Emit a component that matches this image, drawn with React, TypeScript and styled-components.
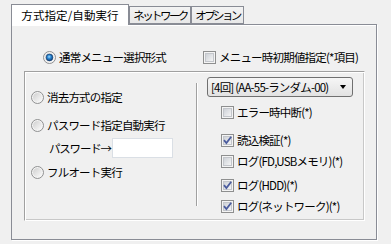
import styled, { createGlobalStyle } from "styled-components";

const GlobalStyle = createGlobalStyle`
  html, body {
    margin: 0;
    padding: 0;
    background: #f0f0f0;
  }
  body {
    font-family: "Noto Sans CJK JP", "Noto Sans", sans-serif;
    font-size: 11.5px;
    line-height: 16px;
    letter-spacing: -0.8px;
    color: #000;
  }
`;

type TabInfo = { label: string; width: number; spacing: number; active?: boolean };

const tabs: TabInfo[] = [
  { label: "方式指定/自動実行", width: 118, spacing: 0.1, active: true },
  { label: "ネットワーク", width: 62, spacing: -2.6 },
  { label: "オプション", width: 53, spacing: -2.6 },
];

type CheckInfo = { label: string; checked: boolean; gap: number };

const checks: CheckInfo[] = [
  { label: "エラー時中断(*)", checked: false, gap: 7 },
  { label: "読込検証(*)", checked: true, gap: 12 },
  { label: "ログ(FD,USBメモリ)(*)", checked: false, gap: 5 },
  { label: "ログ(HDD)(*)", checked: true, gap: 8 },
  { label: "ログ(ネットワーク)(*)", checked: true, gap: 5 },
];

const Radio = ({ selected = false }: { selected?: boolean }) => (
  <svg width="13" height="13" viewBox="0 0 13 13">
    <defs>
      <linearGradient id="radioFill" x1="0" y1="0" x2="1" y2="1">
        <stop offset="0" stopColor="#cfcfcf" />
        <stop offset="1" stopColor="#fbfbfb" />
      </linearGradient>
      <radialGradient id="radioDot" cx="0.45" cy="0.4" r="0.6">
        <stop offset="0" stopColor="#9fdcff" />
        <stop offset="0.45" stopColor="#2a86d2" />
        <stop offset="1" stopColor="#0b3c78" />
      </radialGradient>
    </defs>
    <circle cx="6.5" cy="6.5" r="6" fill="#f4f4f4" stroke="#8f9091" />
    <circle cx="6.5" cy="6.5" r="4.5" fill="url(#radioFill)" />
    {selected && <circle cx="6.5" cy="6.5" r="3.4" fill="url(#radioDot)" stroke="#143d6b" strokeWidth="0.6" />}
  </svg>
);

const Check = ({ checked = false }: { checked?: boolean }) => (
  <svg width="13" height="13" viewBox="0 0 13 13">
    <defs>
      <linearGradient id="checkFill" x1="0" y1="0" x2="1" y2="1">
        <stop offset="0" stopColor="#cbcfd5" />
        <stop offset="1" stopColor="#f7f7f7" />
      </linearGradient>
    </defs>
    <rect x="0.5" y="0.5" width="12" height="12" fill="#f4f4f4" stroke="#8e8f8f" />
    <rect x="2.5" y="2.5" width="8" height="8" fill="url(#checkFill)" stroke="#c3c6cb" />
    {checked && (
      <path d="M3 6.2 L5.4 9 L10.2 2.8" fill="none" stroke="#4b5c9e" strokeWidth="1.8" />
    )}
  </svg>
);

export default function App() {
  return (
    <Window>
      <GlobalStyle />
      <TabStrip>
        {tabs.map((t) => (
          <Tab key={t.label} $active={t.active} $width={t.width} $spacing={t.spacing}>
            {t.label}
          </Tab>
        ))}
      </TabStrip>
      <Panel>
        <TopRow>
          <Option>
            <Radio selected />
            <span>通常メニュー選択形式</span>
          </Option>
          <CheckOption $indent={0}>
            <Check />
            <span>メニュー時初期値指定(*項目)</span>
          </CheckOption>
        </TopRow>
        <GroupBox>
          <LeftColumn>
            <Option>
              <Radio />
              <span>消去方式の指定</span>
            </Option>
            <Option $gap={12}>
              <Radio />
              <span>パスワード指定自動実行</span>
            </Option>
            <PasswordRow>
              <PasswordLabel>パスワード→</PasswordLabel>
              <PasswordInput type="text" />
            </PasswordRow>
            <Option $gap={6}>
              <Radio />
              <span>フルオート実行</span>
            </Option>
          </LeftColumn>
          <Separator />
          <RightColumn>
            <Dropdown>
              <span>[4回] (AA-55-ランダム-00)</span>
              <Arrow />
            </Dropdown>
            {checks.map((c) => (
              <CheckOption key={c.label} $indent={14} $gap={c.gap}>
                <Check checked={c.checked} />
                <span>{c.label}</span>
              </CheckOption>
            ))}
          </RightColumn>
        </GroupBox>
      </Panel>
    </Window>
  );
}

const Window = styled.div`
  width: 391px;
  height: 244px;
  box-sizing: border-box;
  padding: 4px 0 0 11px;
`;

const TabStrip = styled.div`
  display: flex;
  align-items: flex-start;
  height: 21px;
  margin-bottom: -1px;
  position: relative;
  z-index: 1;
`;

const Tab = styled.div<{ $active?: boolean; $width: number; $spacing: number }>`
  box-sizing: border-box;
  width: ${(p) => p.$width}px;
  height: ${(p) => (p.$active ? 21 : 18)}px;
  margin-top: ${(p) => (p.$active ? 0 : 2)}px;
  border: 1px solid #898c95;
  border-bottom: ${(p) => (p.$active ? "none" : "1px solid #898c95")};
  background: ${(p) => (p.$active ? "#ffffff" : "linear-gradient(#f3f3f3, #e8e8e8)")};
  text-align: center;
  line-height: ${(p) => (p.$active ? 20 : 16)}px;
  white-space: nowrap;
  overflow: hidden;
  letter-spacing: ${(p) => p.$spacing}px;
`;

const Panel = styled.div`
  width: 366px;
  height: 216px;
  box-sizing: border-box;
  border: 1px solid #898c95;
  box-shadow: inset 0 1px 0 #ffffff, 1px 1px 0 #ffffff;
  padding: 24px 11px 0 12px;
`;

const TopRow = styled.div`
  display: flex;
  align-items: center;
  height: 16px;
  padding-left: 19px;

  & > :first-child {
    flex: 0 0 160px;
    min-width: 0;
  }
`;

const Option = styled.div<{ $gap?: number }>`
  display: flex;
  align-items: center;
  height: 16px;
  gap: 3px;
  margin-top: ${(p) => p.$gap ?? 0}px;
  white-space: nowrap;
`;

const CheckOption = styled.div<{ $indent: number; $gap?: number }>`
  display: flex;
  align-items: center;
  height: 16px;
  gap: 3px;
  margin-left: ${(p) => p.$indent}px;
  margin-top: ${(p) => p.$gap ?? 0}px;
  white-space: nowrap;
`;

const GroupBox = styled.div`
  margin-top: 6px;
  width: 341px;
  height: 150px;
  box-sizing: border-box;
  border-top: 1px solid #a0a0a0;
  border-left: 1px solid #a0a0a0;
  border-right: 1px solid #ffffff;
  border-bottom: 1px solid #ffffff;
  box-shadow: inset 1px 1px 0 #ffffff, inset -1px -1px 0 #c8c8c8;
  display: grid;
  grid-template-columns: 171px 2px 1fr;
  align-items: start;
`;

const LeftColumn = styled.div`
  display: flex;
  flex-direction: column;
  padding: 17px 0 0 6px;
`;

const PasswordRow = styled.div`
  display: flex;
  align-items: center;
  margin: 5px 0 0 18px;
  gap: 1px;
  white-space: nowrap;
`;

const PasswordLabel = styled.span`
  letter-spacing: -1.2px;
`;

const PasswordInput = styled.input`
  width: 61px;
  height: 20px;
  box-sizing: border-box;
  border: 1px solid #dadfe5;
  background: #ffffff;
  padding: 0;
  margin: 0;
`;

const Separator = styled.div`
  margin-top: 11px;
  height: 123px;
  border-left: 1px solid #a0a0a0;
  border-right: 1px solid #ffffff;
  box-sizing: border-box;
`;

const RightColumn = styled.div`
  display: flex;
  flex-direction: column;
  padding: 5px 0 0 9px;
`;

const Dropdown = styled.div`
  width: 146px;
  height: 20px;
  box-sizing: border-box;
  border: 1px solid #707070;
  border-radius: 3px;
  background: linear-gradient(#f6f6f6 0%, #ececec 50%, #e2e2e2 100%);
  display: flex;
  align-items: center;
  justify-content: space-between;
  padding: 0 6px 0 3px;
  white-space: nowrap;
  letter-spacing: -0.8px;
`;

const Arrow = styled.span`
  width: 0;
  height: 0;
  border-left: 3.5px solid transparent;
  border-right: 3.5px solid transparent;
  border-top: 4px solid #000;
`;
